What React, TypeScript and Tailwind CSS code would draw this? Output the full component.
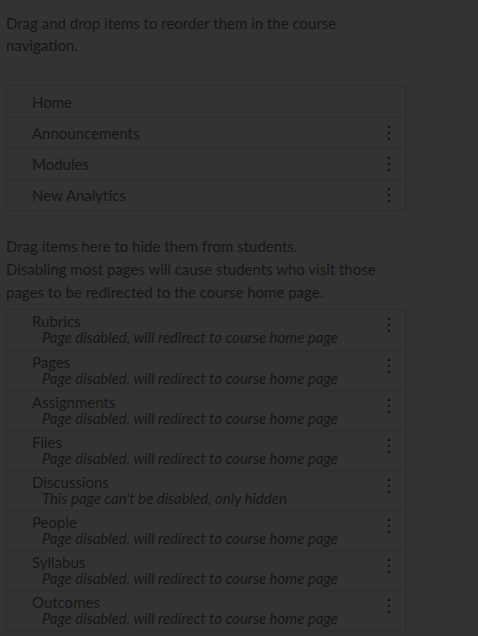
import React from 'react';

const Dots = () => (
  <svg width="4" height="16" viewBox="0 0 4 16" className="shrink-0">
    <circle cx="2" cy="2" r="1.3" fill="#141414" />
    <circle cx="2" cy="8" r="1.3" fill="#141414" />
    <circle cx="2" cy="14" r="1.3" fill="#141414" />
  </svg>
);

const enabled = [
  { name: 'Home', menu: false },
  { name: 'Announcements', menu: true },
  { name: 'Modules', menu: true },
  { name: 'New Analytics', menu: true },
];

const redirect = 'Page disabled, will redirect to course home page';
const hidden = [
  { name: 'Rubrics', note: redirect },
  { name: 'Pages', note: redirect },
  { name: 'Assignments', note: redirect },
  { name: 'Files', note: redirect },
  { name: 'Discussions', note: "This page can't be disabled, only hidden" },
  { name: 'People', note: redirect },
  { name: 'Syllabus', note: redirect },
  { name: 'Outcomes', note: redirect },
];

export default function App() {
  return (
    <div className="h-[636px] overflow-hidden bg-[#333333] text-[#161616] px-[6px] pt-[12px] text-[15px] leading-[22px]" style={{ fontFamily: 'Lato, "Noto Sans", sans-serif' }}>
      <p className="w-[360px]">Drag and drop items to reorder them in the course navigation.</p>
      <ul className="mt-[29px] w-[400px] border border-[#2c2c2c]">
        {enabled.map((it, i) => (
          <li key={it.name} className={`h-[31px] flex items-center justify-between pl-[25px] pr-[14px] ${i ? 'border-t border-[#2c2c2c]' : ''}`}>
            <span>{it.name}</span>
            {it.menu && <Dots />}
          </li>
        ))}
      </ul>
      <p className="mt-[24px]">Drag items here to hide them from students.</p>
      <p className="w-[390px] mt-[1px] leading-[23px]">Disabling most pages will cause students who visit those pages to be redirected to the course home page.</p>
      <ul className="mt-[5px] w-[400px] border border-[#2c2c2c]">
        {hidden.map((it, i) => (
          <li key={it.name} className={`h-[40px] flex justify-between pl-[25px] pr-[14px] pt-[3px] ${i ? 'border-t border-[#2c2c2c]' : ''}`}>
            <div className="leading-[16px]">
              <div>{it.name}</div>
              <div className="pl-[10px] italic text-[15px]">{it.note}</div>
            </div>
            <div className="pt-[4px]"><Dots /></div>
          </li>
        ))}
      </ul>
    </div>
  );
}
